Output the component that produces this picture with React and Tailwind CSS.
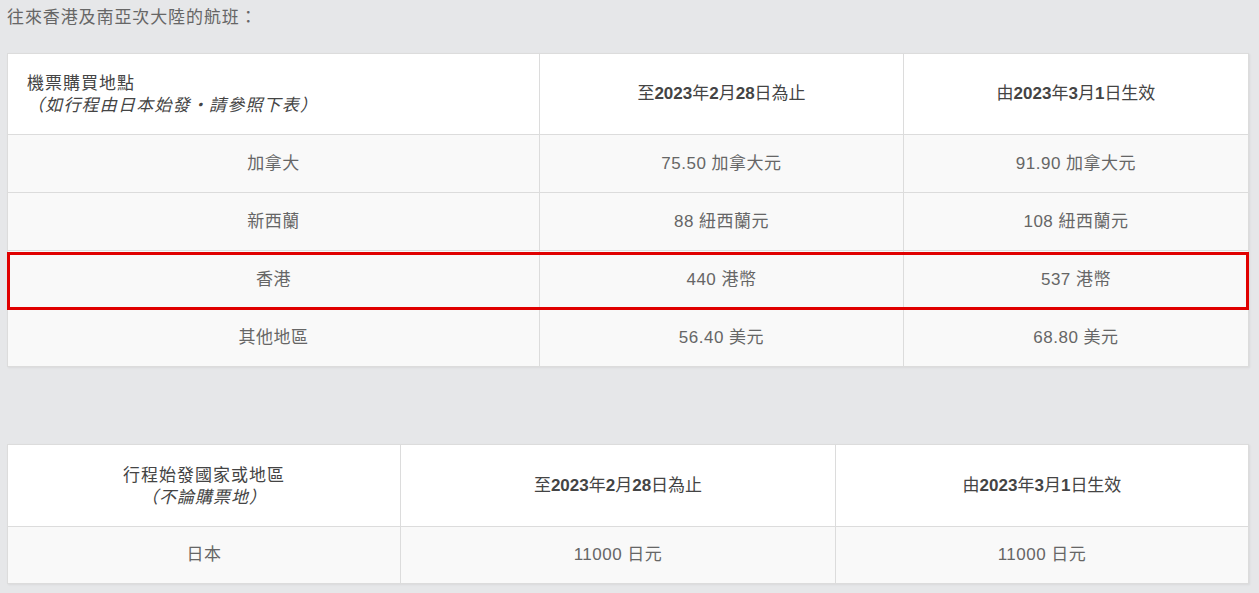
export default function App() {
  const font = { fontFamily: '"Liberation Sans", "Noto Sans CJK TC", sans-serif' };
  const rows1 = [
    ["加拿大", "75.50 加拿大元", "91.90 加拿大元"],
    ["新西蘭", "88 紐西蘭元", "108 紐西蘭元"],
    ["香港", "440 港幣", "537 港幣", true],
    ["其他地區", "56.40 美元", "68.80 美元"],
  ];
  const H1 = () => (
    <span className="tracking-normal">
      至<b>2023</b>年<b>2</b>月<b>28</b>日為止
    </span>
  );
  const H2 = () => (
    <span className="tracking-normal">
      由<b>2023</b>年<b>3</b>月<b>1</b>日生效
    </span>
  );
  return (
    <div
      className="min-h-[593px] w-[1259px] bg-[#e6e7e9] px-[7px] pt-[8px] text-[17px] tracking-[0.5px] text-[#666]"
      style={font}
    >
      <div className="h-[20px] leading-[20px] tracking-[0.9px] text-[#666]">往來香港及南亞次大陸的航班：</div>

      <div className="mt-[25px] w-[1242px] border border-[#dcdcdc] bg-white shadow-[1px_1px_2px_rgba(0,0,0,0.06)]">
        <div className="grid h-[80px] grid-cols-[531px_364px_1fr] bg-white text-[#444]">
          <div className="flex flex-col justify-center pl-[19px] pt-[2px] leading-[22px]">
            <span className="tracking-[1px]">機票購買地點</span>
            <span className="italic tracking-[1.2px]">（如行程由日本始發・請參照下表）</span>
          </div>
          <div className="flex items-center justify-center border-l border-[#dcdcdc]">
            <H1 />
          </div>
          <div className="flex items-center justify-center border-l border-[#dcdcdc]">
            <H2 />
          </div>
        </div>
        {rows1.map((r, i) => (
          <div
            key={i}
            className="relative grid h-[58px] grid-cols-[531px_364px_1fr] border-t border-[#dcdcdc] bg-[#f9f9f9]"
          >
            <div className="flex items-center justify-center">{r[0]}</div>
            <div className="flex items-center justify-center border-l border-[#dcdcdc]">{r[1]}</div>
            <div className="flex items-center justify-center border-l border-[#dcdcdc]">{r[2]}</div>
            {r[3] && (
              <div className="pointer-events-none absolute -left-px -right-px top-px bottom-[-2px] z-10 border-[3px] border-[#e00000]" />
            )}
          </div>
        ))}
      </div>

      <div className="mt-[77px] w-[1242px] border border-[#dcdcdc] bg-white shadow-[1px_1px_2px_rgba(0,0,0,0.06)]">
        <div className="grid h-[81px] grid-cols-[392px_435px_1fr] bg-white text-[#444]">
          <div className="flex flex-col items-center justify-center pt-[2px] leading-[22px]">
            <span className="tracking-[1px]">行程始發國家或地區</span>
            <span className="italic tracking-[1px]">（不論購票地）</span>
          </div>
          <div className="flex items-center justify-center border-l border-[#dcdcdc]">
            <H1 />
          </div>
          <div className="flex items-center justify-center border-l border-[#dcdcdc]">
            <H2 />
          </div>
        </div>
        <div className="grid h-[57px] grid-cols-[392px_435px_1fr] border-t border-[#dcdcdc] bg-[#f9f9f9]">
          <div className="flex items-center justify-center">日本</div>
          <div className="flex items-center justify-center border-l border-[#dcdcdc]">11000 日元</div>
          <div className="flex items-center justify-center border-l border-[#dcdcdc]">11000 日元</div>
        </div>
      </div>
    </div>
  );
}
